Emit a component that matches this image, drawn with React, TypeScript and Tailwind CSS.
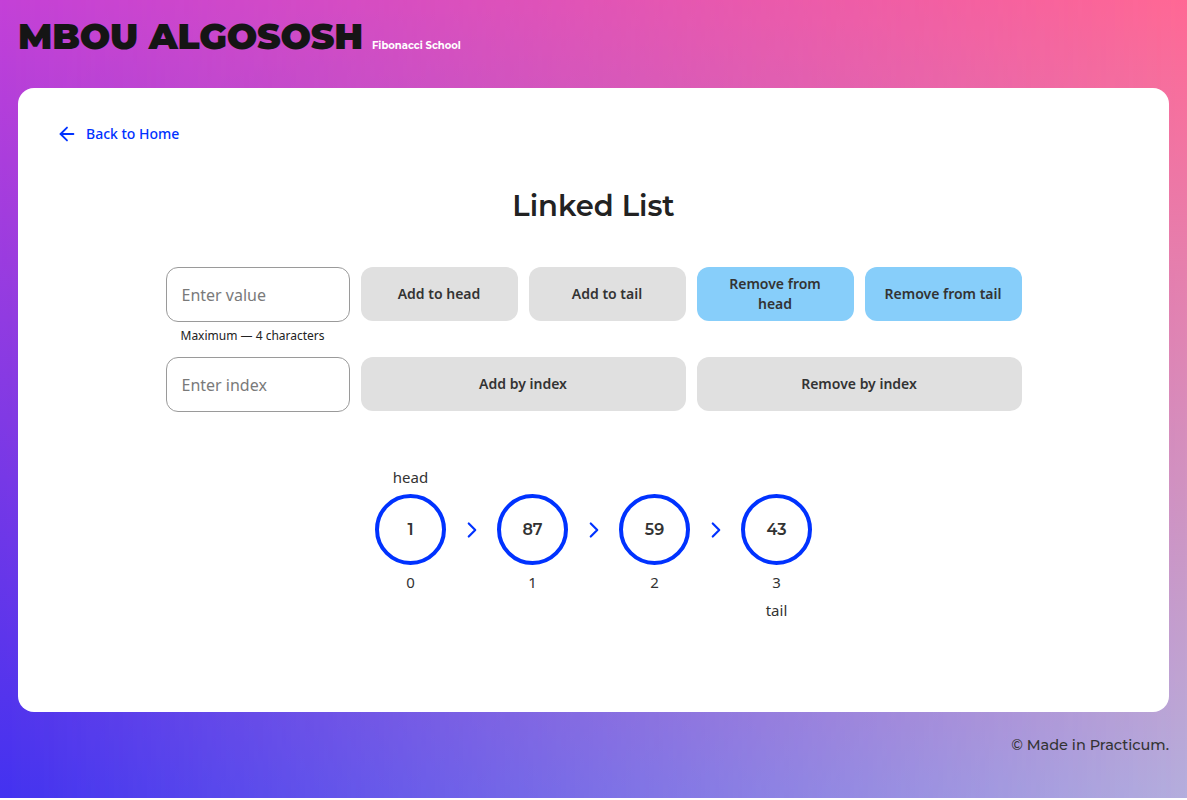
import { ArrowLeft, ChevronRight } from "lucide-react";

const title = "font-['Montserrat','Inter','Liberation_Sans',sans-serif]";
const body = "font-['Noto_Sans','Open_Sans','Liberation_Sans',sans-serif]";

const nodes = ["1", "87", "59", "43"];

const Btn = ({
  children,
  blue,
  w = "w-[157px]",
}: {
  children: React.ReactNode;
  blue?: boolean;
  w?: string;
}) => (
  <button
    type="button"
    className={
      (blue ? "bg-[#87cefa] " : "bg-[#e0e0e0] ") +
      w +
      " h-[54px] rounded-[12px] px-2 whitespace-nowrap text-[14px] leading-[20px] font-semibold text-[#333] " +
      body
    }
  >
    {children}
  </button>
);

const Field = ({ placeholder }: { placeholder: string }) => (
  <input
    placeholder={placeholder}
    className={
      "w-[184px] h-[55px] rounded-[12px] border border-[#9a9a9a] bg-white px-[15px] text-[16px] text-[#333] placeholder:text-[#7a7a7a] outline-none " +
      body
    }
  />
);

export default function App() {
  return (
    <div className="relative min-h-[798px] bg-[linear-gradient(to_bottom,#c441d7,#4332f0)] before:absolute before:inset-0 before:content-[''] before:bg-[linear-gradient(to_bottom,#ff6894,#b4aedd)] before:[mask-image:linear-gradient(to_right,transparent,black)]">
      <div className="relative flex flex-col px-[18px]">
        <header className="flex items-end gap-[9px] pt-[19px] h-[88px] pb-[34px]">
          <h1
            className={
              "text-[36px] leading-[36px] font-black text-[#151515] tracking-[-0.2px] " +
              title
            }
          >
            MBOU ALGOSOSH
          </h1>
          <span
            className={
              "text-[10px] leading-[12px] font-bold text-white mb-[2px] " + title
            }
          >
            Fibonacci School
          </span>
        </header>

        <main className="bg-white rounded-[16px] h-[624px] px-[40px] pt-[35px]">
          <a
            href="#"
            className={
              "flex items-center gap-[8px] text-[#0032ff] text-[14px] leading-[20px] font-medium " +
              body
            }
          >
            <ArrowLeft size={22} strokeWidth={2} className="-ml-[2px]" />
            Back to Home
          </a>

          <h2
            className={
              "mt-[43px] text-center text-[29px] leading-[36px] font-semibold text-[#222] " +
              title
            }
          >
            Linked List
          </h2>

          <div className="mt-[43px] flex flex-col items-center">
            <div className="flex gap-[11px]">
              <div className="flex flex-col">
                <Field placeholder="Enter value" />
                <span
                  className={
                    "mt-[6px] pl-[15px] text-[12px] leading-[16px] text-[#222] " +
                    body
                  }
                >
                  Maximum — 4 characters
                </span>
              </div>
              <div className="flex gap-[11px] items-start">
                <Btn>Add to head</Btn>
                <Btn>Add to tail</Btn>
                <Btn blue>
                  Remove from
                  <br />
                  head
                </Btn>
                <Btn blue>Remove from tail</Btn>
              </div>
            </div>
            <div className="mt-[13px] flex gap-[11px]">
              <Field placeholder="Enter index" />
              <Btn w="w-[325px]">Add by index</Btn>
              <Btn w="w-[325px]">Remove by index</Btn>
            </div>
          </div>

          <div className="mt-[53px] flex justify-center">
            {nodes.map((n, i) => (
              <div key={i} className="flex">
                <div
                  className={
                    "w-[70px] flex flex-col items-center text-[15px] text-[#333] " +
                    body
                  }
                >
                  <span className="h-[24px] leading-[24px]">
                    {i === 0 ? "head" : ""}
                  </span>
                  <div
                    className={
                      "mt-[5px] w-[71px] h-[71px] shrink-0 rounded-full border-[4px] border-[#0032ff] flex items-center justify-center text-[16px] font-semibold text-[#333] " +
                      title
                    }
                  >
                    {n}
                  </div>
                  <span className="mt-[6px] h-[22px] leading-[22px]">{i}</span>
                  <span className="mt-[6px] leading-[22px]">
                    {i === nodes.length - 1 ? "tail" : ""}
                  </span>
                </div>
                {i < nodes.length - 1 && (
                  <div className="w-[52px] flex justify-center pt-[52px]">
                    <ChevronRight
                      size={26}
                      strokeWidth={2}
                      className="text-[#0032ff]"
                    />
                  </div>
                )}
              </div>
            ))}
          </div>
        </main>

        <footer
          className={
            "text-right pt-[23px] text-[14.5px] leading-[20px] font-medium text-[#333] " +
            title
          }
        >
          © Made in Practicum.
        </footer>
      </div>
    </div>
  );
}
